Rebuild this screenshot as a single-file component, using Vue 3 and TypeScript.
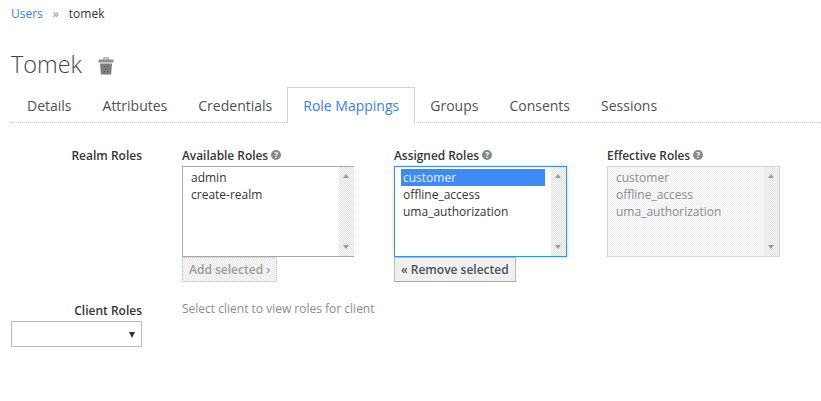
<template>
  <div class="page">
    <nav class="crumbs">
      <a class="link">Users</a>
      <span class="sep">»</span>
      <span>tomek</span>
    </nav>

    <h1 class="title">
      Tomek
      <svg class="trash" viewBox="0 0 16 18" width="16" height="18">
        <path d="M5.500 0.500h5l.5 2h4.500v3H.5v-3H5zM6.500 1.500l-.3 1h3.600l-.3-1z" fill="#8f8f8f" fill-rule="evenodd" />
        <path d="M2 6.500h12l-.9 11H2.900z" fill="#7d7d7d" />
        <path d="M6 9h1v1H6zM9 9h1v1H9zM7.500 11.500h1v1h-1zM6 14h1v1H6zM9 14h1v1H9z" fill="#5c5c5c" />
      </svg>
    </h1>

    <ul class="tabs">
      <li v-for="t in tabs" :key="t" class="tab" :class="{ active: t === 'Role Mappings' }">{{ t }}</li>
    </ul>

    <section class="roles">
      <label class="row-label realm">Realm Roles</label>
      <div v-for="col in columns" :key="col.title" class="col">
        <div class="col-title">
          {{ col.title }}
          <span class="help">?</span>
        </div>
        <div class="listbox" :class="col.kind">
          <div class="items">
            <div v-for="r in col.roles" :key="r" class="item" :class="{ selected: col.kind === 'assigned' && r === 'customer' }">{{ r }}</div>
          </div>
          <div class="scrollbar">
            <i class="arrow up"></i>
            <i class="arrow down"></i>
          </div>
        </div>
        <button v-if="col.action" class="btn" :class="{ disabled: col.kind === 'available' }">{{ col.action }}</button>
      </div>
    </section>

    <section class="client">
      <div class="client-left">
        <label class="row-label">Client Roles</label>
        <div class="select"><i class="caret"></i></div>
      </div>
      <p class="hint">Select client to view roles for client</p>
    </section>
  </div>
</template>

<script setup lang="ts">
interface RoleColumn {
  title: string;
  kind: 'available' | 'assigned' | 'effective';
  roles: string[];
  action?: string;
}

const tabs = ['Details', 'Attributes', 'Credentials', 'Role Mappings', 'Groups', 'Consents', 'Sessions'];

const columns: RoleColumn[] = [
  { title: 'Available Roles', kind: 'available', roles: ['admin', 'create-realm'], action: 'Add selected ›' },
  { title: 'Assigned Roles', kind: 'assigned', roles: ['customer', 'offline_access', 'uma_authorization'], action: '« Remove selected' },
  { title: 'Effective Roles', kind: 'effective', roles: ['customer', 'offline_access', 'uma_authorization'] },
];
</script>

<style>
html, body {
  background: #fff;
}
</style>

<style scoped>
.page {
  width: 821px;
  height: 401px;
  box-sizing: border-box;
  padding: 5px 0 0 11px;
  font-family: "Open Sans", "Liberation Sans", sans-serif;
  font-size: 12px;
  color: #363636;
  overflow: hidden;
}

.crumbs {
  display: flex;
  gap: 10px;
  height: 18px;
  line-height: 18px;
}

.link {
  color: #3b82d9;
}

.sep {
  color: #8b8d8f;
}

.title {
  display: flex;
  align-items: center;
  gap: 16px;
  height: 33px;
  margin: 25px 0 0;
  font-size: 23.4px;
  font-weight: 300;
  line-height: 33px;
  color: #444;
}

.trash {
  margin-top: 2px;
}

.tabs {
  display: flex;
  height: 35px;
  margin: 6px 0 0;
  padding: 0;
  list-style: none;
  border-bottom: 1px dotted #c8c8c8;
}

.tab {
  height: 34px;
  margin-right: -1px;
  padding: 0 15px;
  font-size: 14px;
  line-height: 36px;
  color: #4d5258;
  white-space: nowrap;
  box-sizing: border-box;
  border: 1px solid transparent;
  border-bottom: 0;
}

.tab.active {
  height: 36px;
  color: #3b82d9;
  background: #fff;
  border-color: #d1d1d1;
}

.roles {
  display: grid;
  grid-template-columns: 131px 172px 173px 173px;
  column-gap: 40px;
  margin-top: 24px;
}

.row-label {
  display: block;
  font-weight: 600;
  text-align: right;
  line-height: 16px;
}

.row-label.realm {
  margin-top: 1px;
}

.col-title {
  display: flex;
  align-items: center;
  gap: 3px;
  height: 16px;
  font-size: 11.9px;
  font-weight: 600;
}

.help {
  width: 10px;
  height: 10px;
  border-radius: 50%;
  background: #85888c;
  color: #fff;
  font-size: 8px;
  font-weight: 700;
  line-height: 10px;
  text-align: center;
}

.listbox {
  display: flex;
  height: 91px;
  margin-top: 3px;
  box-sizing: border-box;
  border: 1px solid #a9a9a9;
  background: #fff;
}

.listbox.available {
  border-right: 0;
}

.listbox.assigned {
  border-color: #3b8eea;
  box-shadow: 0 0 3px rgba(59, 142, 234, 0.35);
}

.listbox.effective {
  border-color: #d3d5d6;
  background: repeating-conic-gradient(#f0f1f1 0 25%, #f7f8f8 0 50%) 0 0 / 2px 2px;
  color: #8b8d8f;
}

.items {
  flex: 1;
  padding: 2px 6px 0;
  min-width: 0;
}

.item {
  height: 17px;
  line-height: 17px;
  padding-left: 2px;
}

.item.selected {
  background: #3d8bf2;
  color: #e8f1fd;
}

.scrollbar {
  position: relative;
  width: 15px;
  background: repeating-conic-gradient(#e0e0e0 0 25%, #fbfbfb 0 50%) 0 0 / 2px 2px;
}

.arrow {
  position: absolute;
  left: 4px;
  width: 0;
  height: 0;
  border-left: 3.500px solid transparent;
  border-right: 3.500px solid transparent;
}

.arrow.up {
  top: 7px;
  border-bottom: 4px solid #9a9a9a;
}

.arrow.down {
  bottom: 7px;
  border-top: 4px solid #9a9a9a;
}

.btn {
  display: block;
  height: 25px;
  padding: 0 6px 1px;
  box-sizing: border-box;
  font-family: inherit;
  font-size: 12px;
  font-weight: 600;
  color: #4d5258;
  background: repeating-conic-gradient(#e8e8e8 0 25%, #f9f9f9 0 50%) 0 0 / 2px 2px;
  border: 1px solid #bbb;
  border-bottom-color: #a8a8a8;
}

.btn.disabled {
  color: #9c9c9c;
  border: 1px dotted #c4c4c4;
}

.client {
  display: flex;
  gap: 40px;
  margin-top: 19px;
}

.client-left {
  width: 131px;
  padding-top: 2px;
}

.select {
  position: relative;
  height: 26px;
  margin-top: 2px;
  box-sizing: border-box;
  background: #fff;
  border: 1px solid #bbb;
}

.caret {
  position: absolute;
  top: 10px;
  right: 6px;
  width: 0;
  height: 0;
  border-left: 3px solid transparent;
  border-right: 3px solid transparent;
  border-top: 6px solid #333;
}

.hint {
  margin: 0;
  color: #8b8d8f;
  line-height: 16px;
}
</style>
